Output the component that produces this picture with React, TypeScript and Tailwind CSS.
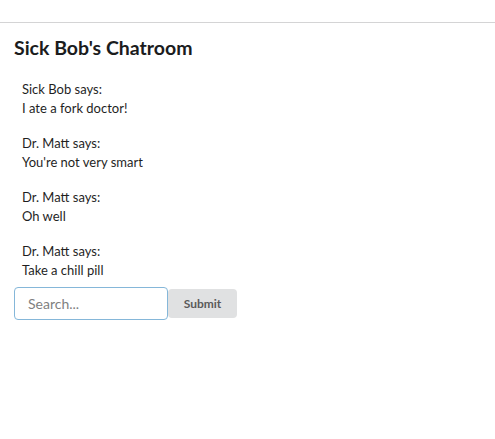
import React from "react";

const messages = [
  { user: "Sick Bob", text: "I ate a fork doctor!" },
  { user: "Dr. Matt", text: "You're not very smart" },
  { user: "Dr. Matt", text: "Oh well" },
  { user: "Dr. Matt", text: "Take a chill pill" },
];

export default function App() {
  return (
    <div className="min-h-screen bg-white text-[13px] leading-[19px] text-[#1f1f1f] font-['Lato','Noto_Sans',sans-serif]">
      <div className="h-[23px] border-b border-[#d4d4d5]" />
      <div className="px-[14px]">
        <h2 className="mt-[13px] text-[19.5px] font-bold leading-[24px] text-[#1b1c1d]">Sick Bob's Chatroom</h2>
        <div className="mt-[20px] flex flex-col gap-[16px] px-[8px]">
          {messages.map((m, i) => (
            <div key={i}>
              <div>{m.user} says:</div>
              <div>{m.text}</div>
            </div>
          ))}
        </div>
        <form className="mt-[7px] flex items-center" onSubmit={(e) => e.preventDefault()}>
          <input
            placeholder="Search..."
            className="h-[33px] w-[154px] rounded-[4px] border border-[#85b7d9] px-[13px] text-[14px] text-[#1f1f1f] placeholder:text-[#7f7f7f] outline-none"
          />
          <button
            type="submit"
            className="h-[29px] w-[69px] rounded-[4px] bg-[#e0e1e2] text-[12px] font-bold text-[#5a5a5a]"
          >
            Submit
          </button>
        </form>
      </div>
    </div>
  );
}
